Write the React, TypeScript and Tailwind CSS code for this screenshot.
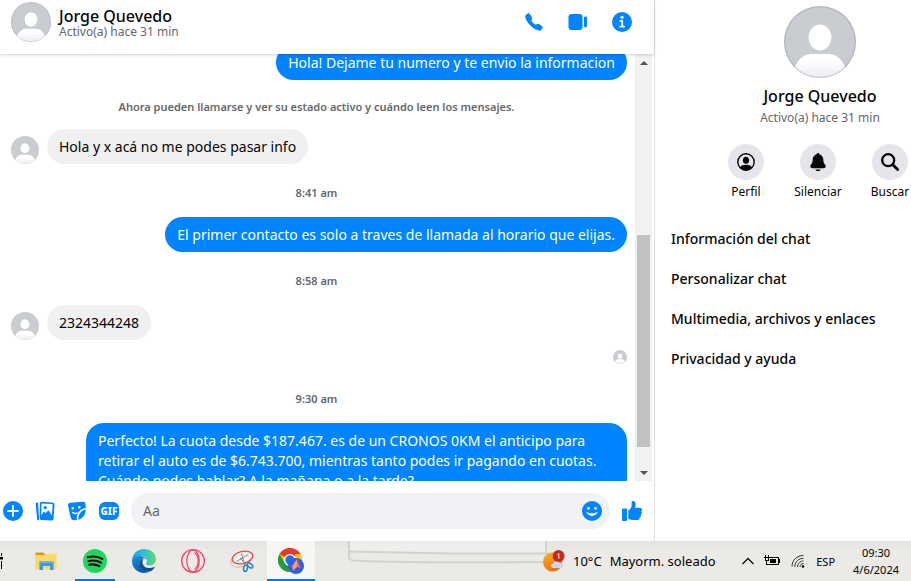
import { useId, useState } from "react";
import type { ReactNode } from "react";
import { IoCall } from "react-icons/io5";

function Avatar({ className, ring }: { className: string; ring?: boolean }) {
    const id = useId();
    return (
        <svg viewBox="0 0 36 36" className={className} aria-hidden="true">
            <defs>
                <clipPath id={`${id}c`}>
                    <circle cx="18" cy="18" r="18" />
                </clipPath>
                <linearGradient id={`${id}g`} x1="0" y1="0" x2="0" y2="1">
                    <stop offset="0.3" stopColor="#fff" />
                    <stop offset="1" stopColor="#e9ebf2" />
                </linearGradient>
            </defs>
            <g clipPath={`url(#${id}c)`}>
                <rect width="36" height="36" fill="#c9ccd1" />
                <ellipse cx="18" cy="15.7" rx="5.7" ry="6.5" fill="#fff" />
                <path d="M4 36C5 29 8.5 24 13.5 24h9C27.500 24 31 29 32 36z" fill={`url(#${id}g)`} />
            </g>
            {ring ? <circle cx="18" cy="18" r="17.7" fill="none" stroke="#000" strokeOpacity="0.12" strokeWidth="0.6" /> : null}
        </svg>
    );
}

function Sent({ children }: { children: ReactNode }) {
    return (
        <div className="flex shrink-0 justify-end">
            <div className="max-w-[541px] rounded-[18px] bg-[#0084ff] px-3 pt-2 pb-[7px] text-sm leading-5 text-white">{children}</div>
        </div>
    );
}

function Received({ children }: { children: ReactNode }) {
    return (
        <div className="flex shrink-0 items-end gap-2 pl-[3px]">
            <Avatar className="size-7" />
            <div className="rounded-[18px] bg-[#f0f0f0] px-3 pt-2 pb-[7px] text-sm leading-5 text-[#050505]">{children}</div>
        </div>
    );
}

function Time({ children }: { children: ReactNode }) {
    return <div className="shrink-0 pt-[21px] pr-[2px] pb-4 text-center text-[11px] leading-4 font-semibold text-[#65676b]">{children}</div>;
}

function Scrollbar() {
    return (
        <div className="mr-[2px] flex w-[17px] shrink-0 flex-col items-center bg-[#f1f1f1]">
            <div className="flex h-[17px] items-center">
                <svg viewBox="0 0 8 4" className="h-1 w-2" fill="#505050">
                    <path d="M0 4l4-4 4 4z" />
                </svg>
            </div>
            <div className="grow-[164]" />
            <div className="w-[13px] grow-[212] bg-[#c1c1c1]" />
            <div className="grow-[17]" />
            <div className="flex h-[17px] items-center">
                <svg viewBox="0 0 8 4" className="h-1 w-2" fill="#505050">
                    <path d="M0 0l4 4 4-4z" />
                </svg>
            </div>
        </div>
    );
}

function ChatHeader() {
    return (
        <header className="z-10 flex h-[54px] shrink-0 items-start justify-between bg-white pr-[22px] pl-[11px] shadow-[0_1px_3px_rgba(0,0,0,0.18)]">
            <div className="flex items-center gap-2 pt-[2px]">
                <Avatar className="size-10" ring />
                <div className="pt-[2px]">
                    <h1 className="text-base leading-[18px] font-medium text-[#050505]">Jorge Quevedo</h1>
                    <p className="text-xs leading-[14px] text-[#65676b]">Activo(a) hace 31 min</p>
                </div>
            </div>
            <div className="flex gap-6 pt-3 text-[#0084ff]">
                <button aria-label="Llamar">
                    <IoCall className="size-5" />
                </button>
                <button aria-label="Videollamada">
                    <svg viewBox="0 0 20 20" className="size-5" fill="currentColor">
                        <rect x="0.500" y="2" width="14" height="16" rx="3" />
                        <rect x="16" y="4.500" width="3" height="11" rx="1.400" />
                    </svg>
                </button>
                <button aria-label="Información">
                    <svg viewBox="0 0 20 20" className="size-5">
                        <circle cx="10" cy="10" r="10" fill="currentColor" />
                        <circle cx="10" cy="5.300" r="1.600" fill="#fff" />
                        <path d="M8.500 9h1.700v5.500M8.200 14.700h3.800" fill="none" stroke="#fff" strokeWidth="1.800" strokeLinecap="round" />
                    </svg>
                </button>
            </div>
        </header>
    );
}

function Composer() {
    const [text, setText] = useState("");

    return (
        <form className="flex h-[60px] shrink-0 items-center gap-3 bg-white pr-3 pl-[3px] text-[#0084ff]" onSubmit={(e) => e.preventDefault()}>
            <button type="button" aria-label="Más acciones">
                <svg viewBox="0 0 20 20" className="size-5">
                    <circle cx="10" cy="10" r="10" fill="currentColor" />
                    <path d="M10 5v10M5 10h10" stroke="#fff" strokeWidth="1.800" strokeLinecap="round" />
                </svg>
            </button>
            <button type="button" aria-label="Adjuntar foto">
                <svg viewBox="0 0 20 20" className="size-5">
                    <path d="M1.400 2.500l1-.4 1 16.600-.6-.4z" fill="currentColor" stroke="currentColor" strokeWidth="1.400" strokeLinejoin="round" />
                    <path d="M6.800.7L17.500 1.500c1.300.1 2.100 1 2 2.300L18.600 17.500c-.1 1.300-1 2-2.200 2L6.500 18.900c-1.200-.1-2-1-1.900-2.200L4.900 2.500C5 1.300 5.700.6 6.800.7z" fill="currentColor" />
                    <path d="M6.300 14.500l.2-11.200c0-.6.400-.9 1-.9l9.200.6c.6 0 1 .5.900 1.100l-.7 10.500-2.800-4.700c-.4-.6-1-.6-1.400-.1l-2 2.500-1-1.200c-.4-.5-1-.4-1.400.2z" fill="#fff" />
                    <circle cx="10.200" cy="6.600" r="1.600" fill="currentColor" />
                </svg>
            </button>
            <button type="button" aria-label="Elegir sticker">
                <svg viewBox="0 0 20 20" className="size-5">
                    <path d="M1 4.500C.9 2.800 1.800 1.900 3.300 1.800L15.800.8c1.700-.1 2.600.6 2.700 2.200l.3 4C13.500 7.500 9.500 11.500 9.800 19l-2.300.2c-2.200.1-3.500-1-4-3.500z" fill="currentColor" />
                    <path d="M18.700 8.700c-.3 4.800-2.700 8.500-7.300 10.100-.3-5.500 2.500-9.600 7.300-10.100z" fill="currentColor" />
                    <circle cx="5.800" cy="7.300" r="1.200" fill="#fff" />
                    <circle cx="12.300" cy="6.200" r="1.200" fill="#fff" />
                    <path d="M5.800 11.500c1.300 1.300 2.800 1.300 4.200.4" fill="none" stroke="#fff" strokeWidth="1.400" strokeLinecap="round" />
                </svg>
            </button>
            <button type="button" aria-label="Elegir un GIF" className="flex h-[18px] w-5 items-center justify-center rounded-[6px] bg-[#0084ff] text-[10px] leading-none font-extrabold text-white">
                GIF
            </button>
            <div className="flex h-9 min-w-0 grow items-center rounded-full bg-[#f0f2f5] pr-2 pl-3">
                <input
                    aria-label="Mensaje"
                    placeholder="Aa"
                    value={text}
                    onChange={(e) => setText(e.target.value)}
                    className="min-w-0 grow bg-transparent text-sm leading-5 text-[#050505] outline-none placeholder:text-[#65676b]"
                />
                <button type="button" aria-label="Elegir un emoji">
                    <svg viewBox="0 0 20 20" className="size-5">
                        <circle cx="10" cy="10" r="10" fill="currentColor" />
                        <circle cx="6.500" cy="7.300" r="1.400" fill="#fff" />
                        <circle cx="13.500" cy="7.300" r="1.400" fill="#fff" />
                        <path d="M4.800 11.500c2.800 4 7.600 4 10.400 0-3 1.700-7.400 1.700-10.400 0z" fill="#fff" stroke="#fff" strokeWidth="0.800" strokeLinejoin="round" />
                    </svg>
                </button>
            </div>
            <button type="button" aria-label="Me gusta">
                <svg viewBox="0 0 20 20" className="size-5" fill="currentColor">
                    <rect x="0" y="7.500" width="5" height="12.500" rx="1.200" />
                    <path d="M6.300 9.500c1.900-1 3.200-3 3.300-5V1.600C9.600.6 10.300 0 11.200 0c1.600 0 2.400 1.500 2.400 3.300 0 1.300-.2 2.400-.6 3.500h4.800c1.300 0 2.200.9 2.200 2 0 .8-.3 1.300-.9 1.700.6.400.8 1 .7 1.600-.1.800-.5 1.300-1.100 1.600.3.500.4 1 .2 1.600-.2.700-.7 1.100-1.300 1.300.1.500.1.900-.2 1.300-.4.800-1.100 1.100-2.100 1.100h-4.200c-1.800 0-3.300-.4-4.800-1.200z" />
                </svg>
            </button>
        </form>
    );
}

function Action({ label, children }: { label: string; children: ReactNode }) {
    return (
        <button className="flex w-[72px] flex-col items-center gap-1">
            <span className="flex size-9 items-center justify-center rounded-full bg-[#e4e6eb]">{children}</span>
            <span className="text-xs leading-4">{label}</span>
        </button>
    );
}

const MENU = ["Información del chat", "Personalizar chat", "Multimedia, archivos y enlaces", "Privacidad y ayuda"];

function Details() {
    return (
        <aside className="w-[257px] shrink-0 overflow-hidden border-l border-[#e0e0e0] bg-white text-[#050505]">
            <div className="flex w-[330px] flex-col items-center pt-[6px]">
                <Avatar className="size-[72px]" ring />
                <h2 className="mt-2 text-base leading-5 font-medium">Jorge Quevedo</h2>
                <p className="mt-1 text-xs leading-4 text-[#65676b]">Activo(a) hace 31 min</p>
                <div className="mt-[18px] flex pr-1">
                    <Action label="Perfil">
                        <svg viewBox="0 0 18 18" className="size-[18px]">
                            <circle cx="9" cy="9" r="8.200" fill="none" stroke="#050505" strokeWidth="1.400" />
                            <ellipse cx="9" cy="7.300" rx="3.100" ry="3.500" fill="#050505" />
                            <path d="M3 14.500c.9-2 3-2.700 6-2.700s5.100.7 6 2.700A8 8 0 0 1 9 17.300 8 8 0 0 1 3 14.500z" fill="#050505" />
                        </svg>
                    </Action>
                    <Action label="Silenciar">
                        <svg viewBox="0 0 18 18" className="size-[18px]" fill="#050505">
                            <path d="M9 0c.8 0 1.300.5 1.400 1.300 2.400.7 3.800 2.800 3.900 5.300.1 2.400.4 3.300 1.500 4.600.6.700.9 1.300.9 2.100 0 1.200-.8 1.900-2.100 1.900H3.400c-1.300 0-2.100-.7-2.100-1.900 0-.8.300-1.400.9-2.100 1.100-1.300 1.400-2.200 1.500-4.600.1-2.500 1.500-4.600 3.900-5.300C7.700.5 8.200 0 9 0z" />
                            <path d="M6.300 16.500h5.400c-.4 1-1.400 1.500-2.700 1.500s-2.300-.5-2.700-1.500z" />
                        </svg>
                    </Action>
                    <Action label="Buscar">
                        <svg viewBox="0 0 18 18" className="size-[18px]" fill="none" stroke="#050505" strokeLinecap="round">
                            <circle cx="7.200" cy="7.200" r="6" strokeWidth="2.300" />
                            <path d="M11.800 11.800l4.800 4.800" strokeWidth="2.800" />
                        </svg>
                    </Action>
                </div>
                <nav className="mt-[19px] flex w-full flex-col px-2">
                    {MENU.map((item) => (
                        <button key={item} className="h-10 px-2 text-left text-sm leading-5 font-medium">
                            {item}
                        </button>
                    ))}
                </nav>
            </div>
        </aside>
    );
}

function TaskButton({ label, open, active, children }: { label: string; open?: boolean; active?: boolean; children: ReactNode }) {
    return (
        <button aria-label={label} className={active ? "flex w-12 flex-col items-center bg-[#f7f6f5]" : "flex w-12 flex-col items-center"}>
            <span className="flex w-full grow items-center justify-center pt-[2px]">{children}</span>
            <span className={active ? "h-[2px] w-12 bg-[#0078d7]" : open ? "h-[2px] w-10 bg-[#0078d7]" : "h-[2px] w-10"} />
        </button>
    );
}

function Taskbar() {
    return (
        <footer className="flex h-10 shrink-0 bg-linear-to-b from-[#e4e3e0] via-[#ebeae7] via-25% to-[#ebeae7] text-black">
            <svg viewBox="0 0 4 40" className="h-10 w-1 shrink-0" fill="#000">
                <path d="M0 16h3v2.500H0zM1 12h1v3H1zM1 20h1v8H1z" />
            </svg>
            <div className="ml-[18px] flex shrink-0 gap-px">
                <TaskButton label="Explorador de archivos">
                    <svg viewBox="0 0 24 24" className="size-6">
                        <path d="M1.500 3.500h8l1.500 2v4h-9.500z" fill="#d99a10" />
                        <path d="M1.500 6h9l1-1.200h11V20.500h-21z" fill="#ffd766" />
                        <path d="M5.500 21v-8.500h14V21H16v-4H9v4z" fill="#3e97d6" />
                        <path d="M5.500 12.500h14v1.700h-14z" fill="#5eb2e8" />
                    </svg>
                </TaskButton>
                <TaskButton label="Spotify" open>
                    <svg viewBox="0 0 24 24" className="size-6">
                        <circle cx="12" cy="12" r="12" fill="#1ed760" />
                        <path d="M4.800 8.300c5-1.400 10-.9 14.500 1.600M5.500 12.200c4.300-1.200 8.600-.7 12.400 1.500M6.200 15.800c3.600-.9 7.100-.5 10.300 1.300" fill="none" stroke="#0a0a0a" strokeWidth="2.100" strokeLinecap="round" />
                    </svg>
                </TaskButton>
                <TaskButton label="Microsoft Edge">
                    <svg viewBox="0 0 24 24" className="size-6">
                        <defs>
                            <linearGradient id="edgeTop" x1="0" y1="0.500" x2="1" y2="0.500">
                                <stop offset="0" stopColor="#1b9ad8" />
                                <stop offset="0.500" stopColor="#2fc3d8" />
                                <stop offset="1" stopColor="#5fdc62" />
                            </linearGradient>
                            <linearGradient id="edgeLow" x1="0" y1="0" x2="0.300" y2="1">
                                <stop offset="0" stopColor="#1b8fdc" />
                                <stop offset="1" stopColor="#0f5cab" />
                            </linearGradient>
                        </defs>
                        <path d="M0 11.500C.4 5 5.400 0 12 0c7 0 12 4.800 12 10.300 0 3.700-2.800 6.100-6 6.100-2.400 0-4-.8-4-1.700 0-.7 1-1.200 1-2.900C15 9 12.500 7 9 7 4.500 7 1 9 0 11.500z" fill="url(#edgeTop)" />
                        <path d="M0 11.500C1 8.500 4 7 7.500 7c4.300 0 7.200 2.200 7.400 4.600C14.500 10.200 13 9.200 11.500 9.300 8.500 10 7.200 12.700 8 16c1 4 4.500 6.500 8.500 7.100C14.800 23.800 13.500 24 12 24 5.200 24-.3 18.500 0 11.500z" fill="url(#edgeLow)" />
                        <path d="M9.500 10.200c-3 2.500-3 7.300.5 10.500 3.200 2.900 7.700 2.400 10.200.5 1-.8 1.800-1.700 2.400-2.700.3-.5-.1-.8-.6-.5-4.600 2.300-10.500.9-11.400-3.800-.3-1.600 0-3 .9-4.200z" fill="#124f96" />
                    </svg>
                </TaskButton>
                <TaskButton label="Opera GX">
                    <svg viewBox="0 0 24 24" className="size-6" fill="none" stroke="#fa3a62">
                        <circle cx="12" cy="12" r="11.300" strokeWidth="1.300" />
                        <ellipse cx="12" cy="12" rx="6.200" ry="11" strokeWidth="1.200" />
                        <path d="M13.500 3.500c5 4 5 13 0 17" strokeWidth="1.200" />
                    </svg>
                </TaskButton>
                <TaskButton label="Recortes">
                    <svg viewBox="0 0 24 24" className="size-6" fill="none">
                        <ellipse cx="10.500" cy="12" rx="10" ry="6" transform="rotate(-14 10.500 12)" stroke="#f0a6a8" strokeWidth="0.900" />
                        <ellipse cx="12.500" cy="8.500" rx="10.500" ry="6" transform="rotate(-14 12.500 8.500)" stroke="#e5484d" strokeWidth="1.300" fill="#fff" fillOpacity="0.500" />
                        <path d="M11.500 4.500l3 11M6.500 12.500L18.500 5.500M10 9l6 6" stroke="#7b868e" strokeWidth="1" />
                        <ellipse cx="15.500" cy="19.200" rx="1.900" ry="3.200" transform="rotate(10 15.500 19.200)" stroke="#2a8bcb" strokeWidth="1.600" />
                        <ellipse cx="20" cy="16.500" rx="1.900" ry="3.200" transform="rotate(-50 20 16.500)" stroke="#2a8bcb" strokeWidth="1.600" />
                    </svg>
                </TaskButton>
                <TaskButton label="Google Chrome" active>
                    <svg viewBox="0 0 26 26" className="size-[26px]">
                        <circle cx="12" cy="12" r="12" fill="#fbc116" />
                        <path d="M12 12L1.600 6A12 12 0 0 1 22.400 6z" fill="#e33b2e" />
                        <path d="M1.600 6A12 12 0 0 0 12 24l5.200-9L12 12 6.800 15z" fill="#249a47" />
                        <path d="M12 6h10.400L17 12z" fill="#e33b2e" />
                        <path d="M22.400 6A12 12 0 0 1 23 16l-6-1V6z" fill="#fbc116" />
                        <circle cx="12" cy="12" r="6" fill="#fff" />
                        <circle cx="12" cy="12" r="4.700" fill="#1a73e8" />
                        <circle cx="18" cy="18" r="8" fill="#2f62d9" />
                        <path d="M18.800 11.500l4.200 9-4-1.700-4 4-.3-4-2.500.8z" fill="#f0655f" />
                        <path d="M18.800 11.500l.2 7.300-4 4-.3-4z" fill="#f99b8f" />
                    </svg>
                </TaskButton>
            </div>
            <svg viewBox="0 0 200 40" className="ml-[33px] h-10 w-[200px] shrink-0" fill="none" stroke="#d3d2cf" strokeWidth="2">
                <path d="M2 0h196v12.500l-96 0L2 10.500z" fill="#efeeec" stroke="none" />
                <path d="M1 0v16q0 3 5 3.500Q40 22 195 21M2 10.500l100 2h98M198 0v12" />
            </svg>
            <div className="-ml-[5px] flex items-center gap-2 text-[13px] leading-5 whitespace-nowrap">
                <svg viewBox="0 0 24 24" className="size-[22px] shrink-0">
                    <defs>
                        <linearGradient id="sun" x1="0" y1="0" x2="0.500" y2="1">
                            <stop offset="0" stopColor="#f5b52c" />
                            <stop offset="1" stopColor="#ee6f12" />
                        </linearGradient>
                    </defs>
                    <circle cx="10.500" cy="13" r="10.500" fill="url(#sun)" />
                    <path d="M11.500 19.500c-3.500 0-3.800-4.300-.6-4.500.8-3.600 6-4 7.400-.8 4-.6 5 5.300.8 5.300z" fill="#c3d8f8" />
                    <circle cx="17" cy="6.500" r="6.500" fill="#c42b1c" />
                    <path d="M15.800 5l1.500-1v5.500" stroke="#fff" strokeWidth="1" fill="none" />
                </svg>
                <span>10°C</span>
                <span>Mayorm. soleado</span>
            </div>
            <div className="ml-auto flex shrink-0 items-center pr-3 text-[11px] leading-[17px]">
                <button aria-label="Mostrar iconos ocultos">
                    <svg viewBox="0 0 12 8" className="h-2 w-3" fill="none" stroke="#111" strokeWidth="1.300">
                        <path d="M.5 7L6 1.500 11.500 7" />
                    </svg>
                </button>
                <svg viewBox="0 0 16 12" className="ml-[10px] h-3 w-4" fill="#000" shapeRendering="crispEdges">
                    <path d="M6 2h8v1H6zM14 2h1v8h-1zM4 9h10v1H4zM15 4h1v4h-1zM6 4h6v4H6z" />
                    <path d="M1 0h1v2H1zM4 0h1v2H4zM0 2h6v1H0zM1 3h1v2H1zM4 3h1v2H4zM1 5h4v1H1zM2 6h1v4H2zM3 9h1v1H3z" />
                </svg>
                <svg viewBox="0 0 14 14" className="ml-[11px] size-[14px]" fill="none" stroke="#333">
                    <path d="M1 12.500C1 6 6 1.500 12.500 1.500M3.700 12.800c0-5 4-8.500 8.800-8.500M6.500 13c0-3.500 2.700-6 6-6M9 13c0-2 1.500-3.500 3.500-3.500" />
                    <circle cx="12" cy="12.500" r="1.300" fill="#000" stroke="none" />
                </svg>
                <span className="ml-[11px]">ESP</span>
                <div className="ml-[18px] text-center">
                    <div>09:30</div>
                    <div>4/6/2024</div>
                </div>
            </div>
        </footer>
    );
}

export default function App() {
    return (
        <div className="flex h-screen flex-col overflow-hidden bg-white font-['Noto_Sans','Open_Sans',sans-serif]">
            <div className="flex min-h-0 grow">
                <main className="flex min-w-0 grow flex-col">
                    <ChatHeader />
                    <div className="flex min-h-0 grow">
                        <div className="flex min-w-0 grow flex-col overflow-hidden px-2">
                            {/* the list is scrolled, so the first bubble runs under the header */}
                            <div className="-mt-[9px] shrink-0">
                                <Sent>Hola! Dejame tu numero y te envio la informacion</Sent>
                            </div>
                            <p className="shrink-0 pt-[19px] pr-[2px] pb-[14px] text-center text-[11px] leading-4 font-semibold text-[#65676b]">
                                Ahora pueden llamarse y ver su estado activo y cuándo leen los mensajes.
                            </p>
                            <Received>Hola y x acá no me podes pasar info</Received>
                            <Time>8:41 am</Time>
                            <Sent>El primer contacto es solo a traves de llamada al horario que elijas.</Sent>
                            <Time>8:58 am</Time>
                            <Received>2324344248</Received>
                            <div className="flex shrink-0 justify-end pt-[10px] pb-[6px]">
                                <Avatar className="size-[14px]" />
                            </div>
                            <Time>9:30 am</Time>
                            <Sent>
                                Perfecto! La cuota desde $187.467. es de un CRONOS 0KM el anticipo para retirar el auto es de $6.743.700, mientras tanto podes ir
                                pagando en cuotas. Cuándo podes hablar? A la mañana o a la tarde?
                            </Sent>
                        </div>
                        <Scrollbar />
                    </div>
                    <Composer />
                </main>
                <Details />
            </div>
            <Taskbar />
        </div>
    );
}
